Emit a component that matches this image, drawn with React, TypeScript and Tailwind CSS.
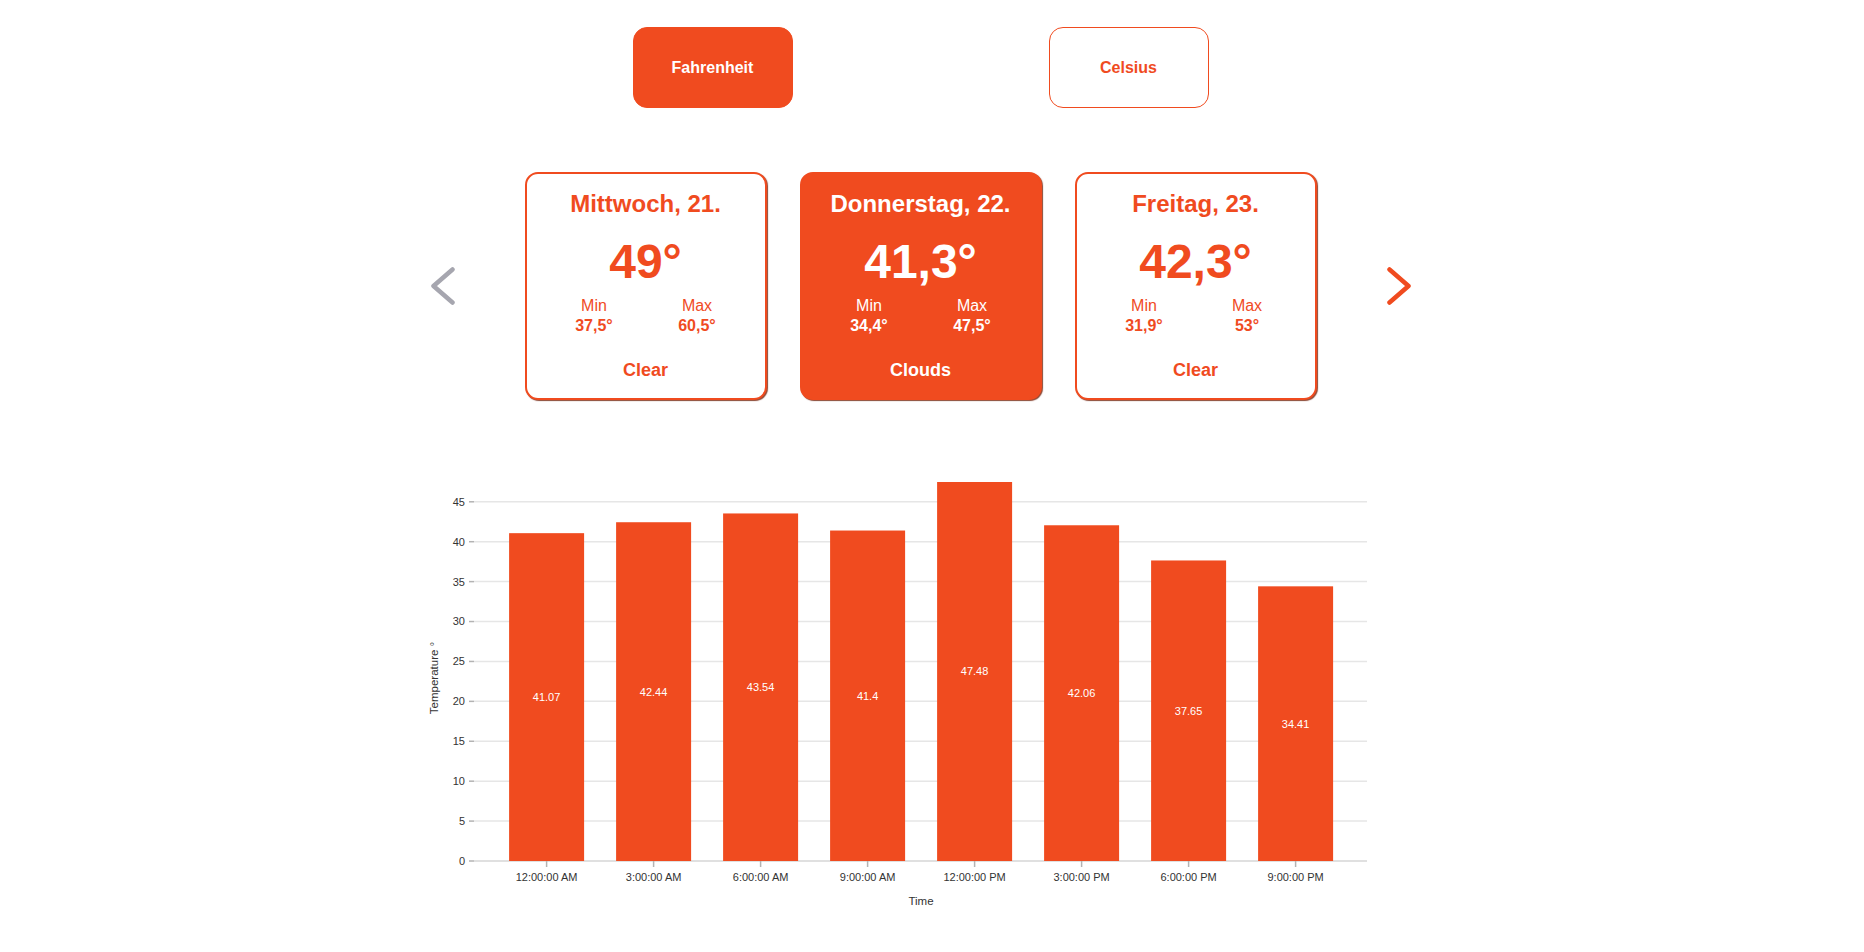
import React, { useState } from "react";

interface Day {
  title: string;
  temp: string;
  min: string;
  max: string;
  weather: string;
}

interface Slot {
  time: string;
  temp: number;
}

const ORANGE = "#f04b1f";

const days: Day[] = [
  { title: "Mittwoch, 21.", temp: "49°", min: "37,5°", max: "60,5°", weather: "Clear" },
  { title: "Donnerstag, 22.", temp: "41,3°", min: "34,4°", max: "47,5°", weather: "Clouds" },
  { title: "Freitag, 23.", temp: "42,3°", min: "31,9°", max: "53°", weather: "Clear" },
];

const slots: Slot[] = [
  { time: "12:00:00 AM", temp: 41.07 },
  { time: "3:00:00 AM", temp: 42.44 },
  { time: "6:00:00 AM", temp: 43.54 },
  { time: "9:00:00 AM", temp: 41.4 },
  { time: "12:00:00 PM", temp: 47.48 },
  { time: "3:00:00 PM", temp: 42.06 },
  { time: "6:00:00 PM", temp: 37.65 },
  { time: "9:00:00 PM", temp: 34.41 },
];

const DayCard: React.FC<{ day: Day; active: boolean }> = ({ day, active }) => {
  const text = active ? "text-white" : "text-[#f04b1f]";
  return (
    <div
      className={`w-[242px] h-[228px] rounded-[13px] border-2 border-[#f04b1f] shadow-[1px_1px_1px_rgba(110,25,0,0.8)] flex flex-col items-center pt-[14px] ${
        active ? "bg-[#f04b1f]" : "bg-white"
      } ${text}`}
    >
      <div className="text-[24px] leading-[32px] font-bold">{day.title}</div>
      <div className="mt-[18px] text-[48px] leading-[48px] font-bold">{day.temp}</div>
      <div className="mt-[10px] w-full px-4 grid grid-cols-2 text-center">
        <div>
          <div className="text-[16px] leading-[20px]">Min</div>
          <div className="text-[16px] leading-[20px] font-bold">{day.min}</div>
        </div>
        <div>
          <div className="text-[16px] leading-[20px]">Max</div>
          <div className="text-[16px] leading-[20px] font-bold">{day.max}</div>
        </div>
      </div>
      <div className="mt-[20px] text-[18px] leading-[28px] font-bold">{day.weather}</div>
    </div>
  );
};

const Chevron: React.FC<{ dir: "left" | "right"; color: string }> = ({ dir, color }) => (
  <svg width="24" height="38" viewBox="0 0 24 38" className="shrink-0">
    <polyline
      points={dir === "left" ? "21.5,2.5 2.5,19 21.5,35.5" : "2.5,2.5 21.5,19 2.5,35.5"}
      fill="none"
      stroke={color}
      strokeWidth="4.5"
      strokeLinecap="round"
      strokeLinejoin="round"
    />
  </svg>
);

// plot geometry (svg coords)
const Y0 = 401;
const PX = 379 / 47.48;
const GRID_L = 53;
const GRID_R = 946;
const FIRST = 125.6;
const BAND = 107;
const BAR_W = 75;

const TempChart: React.FC = () => (
  <svg width="1000" height="460" className="mt-[60px]" style={{ fontFamily: "'Liberation Sans', Arial, sans-serif" }}>
    {[0, 5, 10, 15, 20, 25, 30, 35, 40, 45].map((v) => {
      const y = Y0 - v * PX;
      return (
        <g key={v}>
          <line x1={GRID_L} x2={GRID_R} y1={y} y2={y} stroke="#e6e6e6" strokeWidth="1.5" />
          <line x1={48} x2={GRID_L} y1={y} y2={y} stroke="#b3b3b3" strokeWidth="1.5" />
          <text x={44} y={y} dy="0.355em" textAnchor="end" fontSize="11" fill="#333">
            {v}
          </text>
        </g>
      );
    })}
    <line x1={GRID_L} x2={GRID_R} y1={Y0} y2={Y0} stroke="#dcdcdc" strokeWidth="1.5" />
    {slots.map((s, i) => {
      const cx = FIRST + BAND * i;
      const h = s.temp * PX;
      return (
        <g key={s.time}>
          <rect x={cx - BAR_W / 2} y={Y0 - h} width={BAR_W} height={h} fill={ORANGE} />
          <text x={cx} y={Y0 - h / 2} dy="0.355em" textAnchor="middle" fontSize="11" fill="#fff">
            {s.temp}
          </text>
          <line x1={cx} x2={cx} y1={Y0} y2={Y0 + 6} stroke="#b3b3b3" strokeWidth="1.5" />
          <text x={cx} y={417} dy="0.355em" textAnchor="middle" fontSize="11" fill="#333">
            {s.time}
          </text>
        </g>
      );
    })}
    <text x={500} y={441} dy="0.355em" textAnchor="middle" fontSize="11.5" fill="#333">
      Time
    </text>
    <text
      x={13}
      y={218}
      dy="0.355em"
      textAnchor="middle"
      fontSize="11.5"
      fill="#333"
      transform="rotate(-90 13 218)"
    >
      Temperature °
    </text>
  </svg>
);

export default function App() {
  const [unit, setUnit] = useState<"F" | "C">("F");

  return (
    <div className="w-[1841px] min-h-[952px] bg-white flex flex-col items-center font-['Liberation_Sans',Arial,sans-serif]">
      {/* unit toggle */}
      <div className="pt-[27px] w-[832px] grid grid-cols-2">
        <div className="flex justify-center">
          <button
            onClick={() => setUnit("F")}
            className={`w-[160px] h-[81px] rounded-[14px] border border-[#f04b1f] text-[16px] font-bold ${
              unit === "F" ? "bg-[#f04b1f] text-white" : "bg-white text-[#f04b1f]"
            }`}
          >
            Fahrenheit
          </button>
        </div>
        <div className="flex justify-center">
          <button
            onClick={() => setUnit("C")}
            className={`w-[160px] h-[81px] rounded-[14px] border border-[#f04b1f] text-[16px] font-bold ${
              unit === "C" ? "bg-[#f04b1f] text-white" : "bg-white text-[#f04b1f]"
            }`}
          >
            Celsius
          </button>
        </div>
      </div>

      {/* day cards */}
      <div className="mt-[64px] flex items-center gap-[70px]">
        <Chevron dir="left" color="#a6a6af" />
        <div className="flex gap-[33px]">
          {days.map((d, i) => (
            <DayCard key={d.title} day={d} active={i === 1} />
          ))}
        </div>
        <Chevron dir="right" color={ORANGE} />
      </div>

      <TempChart />
    </div>
  );
}
